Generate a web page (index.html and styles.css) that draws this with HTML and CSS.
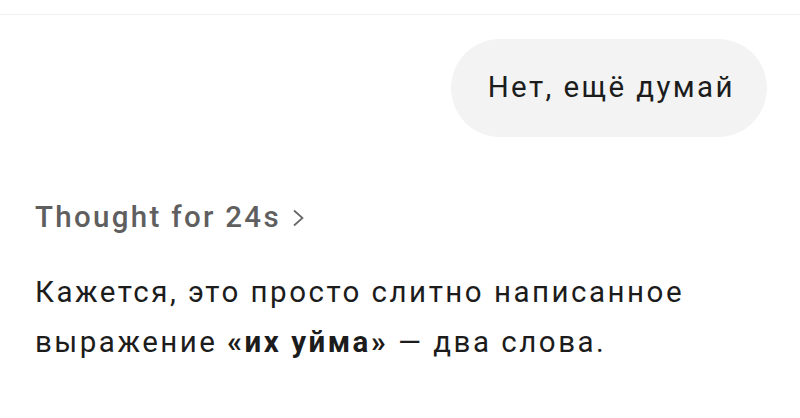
FILE: index.html
```html
<!DOCTYPE html>
<html lang="ru">
<head>
<meta charset="utf-8">
<link rel="stylesheet" href="styles.css">
</head>
<body>
<div class="topbar"></div>
<main class="chat">
  <div class="user-row">
    <div class="bubble">Нет, ещё думай</div>
  </div>
  <div class="thought">
    <span>Thought for 24s</span>
    <svg class="chev" width="13" height="18" viewBox="0 0 13 18" aria-hidden="true"><path d="M2 1.5 L10.5 9 L2 16.5" fill="none" stroke="#666666" stroke-width="1.7"/></svg>
  </div>
  <p class="answer">Кажется, это просто слитно написанное выражение <b>«их уйма»</b> — два слова.</p>
</main>
</body>
</html>
```
FILE: styles.css
```css
html, body {
  margin: 0;
  padding: 0;
  background: #ffffff;
}
body {
  font-family: Roboto, "Noto Sans", "Liberation Sans", sans-serif;
  width: 800px;
  height: 418px;
  overflow: hidden;
}
.topbar {
  height: 14px;
  border-bottom: 1px solid #efefef;
}
.chat {
  padding: 24px 33px 0 35px;
}
.user-row {
  display: flex;
  justify-content: flex-end;
}
.bubble {
  background: #f3f3f3;
  color: #1c1c1c;
  font-size: 29.5px;
  line-height: 40px;
  padding: 28px 32px 30px 37px;
  border-radius: 49px;
  letter-spacing: 2.4px;
}
.thought {
  margin-top: 60px;
  display: flex;
  align-items: center;
  gap: 11px;
  color: #5f5f5f;
  font-size: 29.5px;
  font-weight: 500;
  line-height: 40px;
  letter-spacing: 2.3px;
}
.chev {
  margin-top: 2px;
}
.answer {
  margin: 30px 0 0;
  font-size: 29.5px;
  line-height: 50px;
  color: #1c1c1c;
  letter-spacing: 2.5px;
}
.answer b {
  font-weight: 700;
}
```
